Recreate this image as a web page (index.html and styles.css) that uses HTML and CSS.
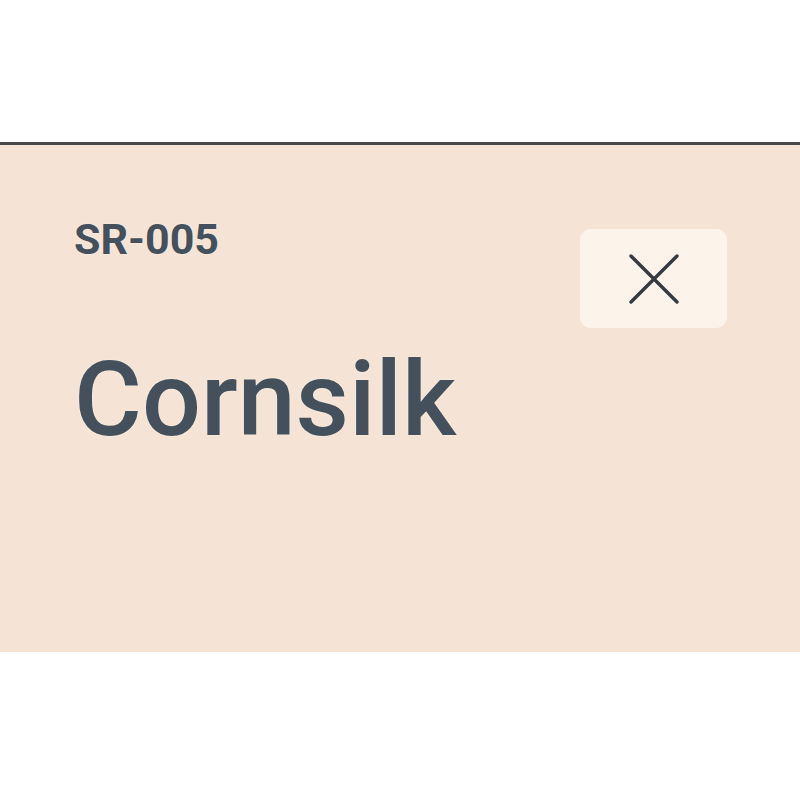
FILE: index.html
```html
<!DOCTYPE html>
<html>
<head>
<meta charset="utf-8">
<link rel="stylesheet" href="styles.css">
</head>
<body>
<div class="page">
  <section class="card">
    <div class="card-text">
      <div class="code">SR-005</div>
      <h1 class="name">Cornsilk</h1>
    </div>
    <button class="close" aria-label="Close">
      <svg width="52" height="52" viewBox="0 0 52 52">
        <path d="M3 3 L49 49 M49 3 L3 49" stroke="#333a40" stroke-width="3.4" stroke-linecap="round" fill="none"/>
      </svg>
    </button>
  </section>
</div>
</body>
</html>
```

FILE: styles.css
```css
html, body {
  margin: 0;
  padding: 0;
  background: #ffffff;
}
.page {
  padding-top: 142px;
}
.card {
  box-sizing: border-box;
  height: 510px;
  background: #f5e4d5;
  border-top: 3px solid #48484a;
  display: flex;
  justify-content: space-between;
  align-items: flex-start;
  padding: 69px 73px 0 74px;
  font-family: Roboto, "Noto Sans", sans-serif;
  color: #44505b;
}
.card-text {
  display: flex;
  flex-direction: column;
}
.code {
  font-size: 43px;
  font-weight: 700;
  line-height: 50px;
  text-shadow: 0 0 2px rgba(255,255,255,0.6);
}
.name {
  margin: 76px 0 0 0;
  font-size: 104px;
  font-weight: 500;
  line-height: 120px;
  letter-spacing: 0;
  text-shadow: 0 0 2px rgba(255,255,255,0.6);
}
.close {
  margin-top: 15px;
  width: 147px;
  height: 99px;
  border: none;
  border-radius: 11px;
  background: #fcf3eb;
  display: flex;
  align-items: center;
  justify-content: center;
  padding: 0;
}
```
